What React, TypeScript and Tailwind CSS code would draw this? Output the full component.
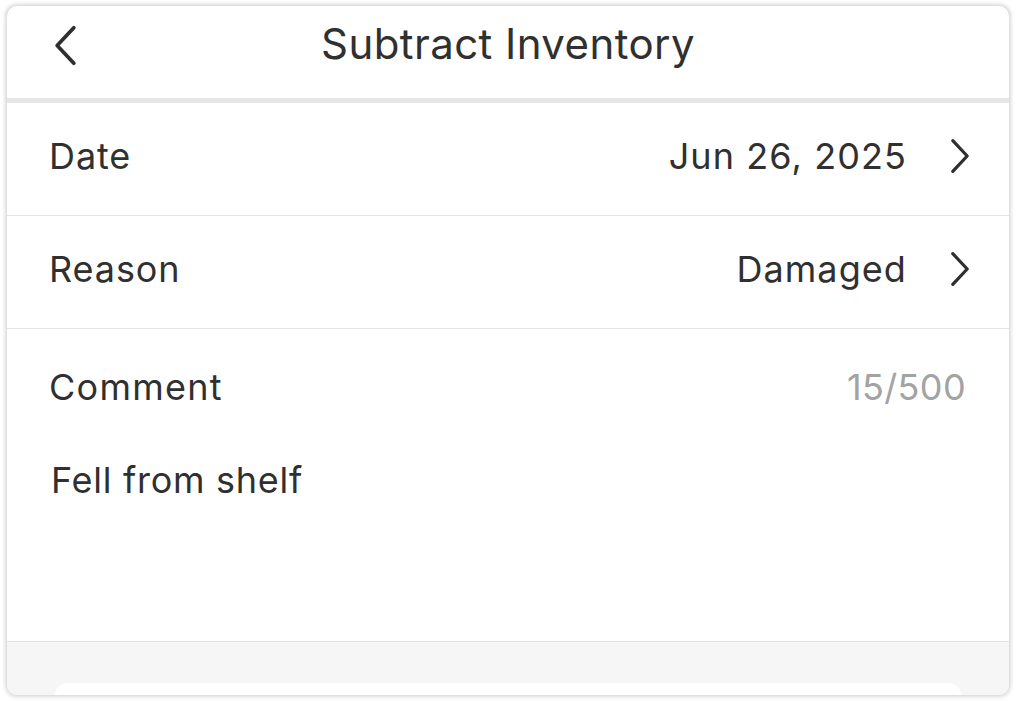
import React from "react";

function Chevron({ dir, className }: { dir: "left" | "right"; className?: string }) {
  return (
    <svg viewBox="0 0 24 40" className={className} fill="none">
      <path
        d={dir === "left" ? "M20 3 L4 20 L20 37" : "M4 3 L20 20 L4 37"}
        stroke="#2f2f2f"
        strokeWidth="3.6"
        strokeLinecap="round"
        strokeLinejoin="round"
      />
    </svg>
  );
}

function Row({ label, value }: { label: string; value: string }) {
  return (
    <button className="flex h-[113px] w-full items-center border-b border-[#e4e4e4] pb-[6px] pl-[42px] pr-[38px] text-left">
      <span className="text-[36px] tracking-[0.025em] text-[#303030]">{label}</span>
      <span className="ml-auto text-[36px] tracking-[0.03em] text-[#303030]">{value}</span>
      <Chevron dir="right" className="ml-[42px] h-[36px] w-[22px]" />
    </button>
  );
}

export default function App() {
  return (
    <div
      className="h-screen w-full bg-white px-[7px] pt-[6px] pb-[8px]"
      style={{ fontFamily: "Inter, 'Open Sans', sans-serif" }}
    >
      <div className="flex h-full flex-col overflow-hidden rounded-[10px] bg-white shadow-[0_0_5px_1px_rgba(0,0,0,0.22)]">
        {/* Header */}
        <div className="relative flex h-[92px] shrink-0 items-center justify-center pb-[18px]">
          <button className="absolute left-[46px] top-[18px]">
            <Chevron dir="left" className="h-[43px] w-[25px]" />
          </button>
          <h1 className="text-[42px] tracking-[0.01em] text-[#303030]">Subtract Inventory</h1>
        </div>
        <div className="h-[5px] shrink-0 bg-[#e6e6e6]" />

        <Row label="Date" value="Jun 26, 2025" />
        <Row label="Reason" value="Damaged" />

        {/* Comment */}
        <div className="flex h-[313px] shrink-0 flex-col border-b border-[#e4e4e4] pl-[42px] pr-[43px] pt-[31px]">
          <div className="flex items-center justify-between">
            <span className="text-[36px] tracking-[0.035em] text-[#303030]">Comment</span>
            <span className="text-[36px] tracking-[0.01em] text-[#a3a3a3]">15/500</span>
          </div>
          <p className="mt-[39px] pl-[2px] text-[36px] tracking-[0.02em] text-[#303030]">Fell from shelf</p>
        </div>

        {/* Bottom area */}
        <div className="flex flex-1 flex-col justify-end bg-[#f6f6f6] px-[48px]">
          <div className="h-[12px] rounded-t-[24px] bg-white" />
        </div>
      </div>
    </div>
  );
}
